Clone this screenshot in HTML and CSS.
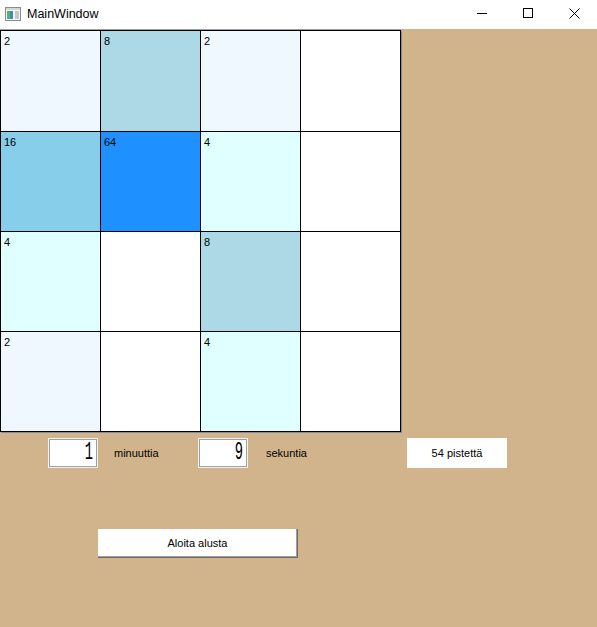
FILE: index.html
```html
<!DOCTYPE html>
<html lang="fi">
<head>
<meta charset="utf-8">
<title>MainWindow</title>
<link rel="stylesheet" href="styles.css">
</head>
<body>
<div class="window">
  <header class="titlebar">
    <svg class="app-icon" width="16" height="14" viewBox="0 0 16 14">
      <rect x="0.5" y="0.5" width="15" height="13" fill="#f4f4f4" stroke="#8c8c8c"/>
      <rect x="1" y="1" width="14" height="2" fill="#d6d6d6"/>
      <rect x="2" y="4" width="6" height="8" fill="#3d8fb0"/>
      <rect x="2" y="4" width="3" height="8" fill="#5fae7a"/>
      <rect x="10" y="4" width="4" height="8" fill="#c8c8c8"/>
    </svg>
    <span class="title">MainWindow</span>
    <div class="win-buttons">
      <div class="win-btn">
        <svg width="10" height="10" viewBox="0 0 10 10"><line x1="0" y1="5.5" x2="10" y2="5.5" stroke="#000" stroke-width="1"/></svg>
      </div>
      <div class="win-btn">
        <svg width="10" height="10" viewBox="0 0 10 10"><rect x="0.5" y="0.5" width="9" height="9" fill="none" stroke="#000" stroke-width="1"/></svg>
      </div>
      <div class="win-btn">
        <svg width="11" height="11" viewBox="0 0 11 11"><path d="M0.5 0.5 L10.5 10.5 M10.5 0.5 L0.5 10.5" stroke="#000" stroke-width="1"/></svg>
      </div>
    </div>
  </header>

  <main class="content">
    <div class="board-frame">
      <div class="board">
        <div class="cell c2">2</div>
        <div class="cell c8">8</div>
        <div class="cell c2">2</div>
        <div class="cell"></div>

        <div class="cell c16">16</div>
        <div class="cell c64">64</div>
        <div class="cell c4">4</div>
        <div class="cell"></div>

        <div class="cell c4">4</div>
        <div class="cell"></div>
        <div class="cell c8">8</div>
        <div class="cell"></div>

        <div class="cell c2">2</div>
        <div class="cell"></div>
        <div class="cell c4">4</div>
        <div class="cell"></div>
      </div>
    </div>

    <div class="controls">
      <div class="lcd"><span class="lcd-digit">1</span></div>
      <span class="label label-min">minuuttia</span>
      <div class="lcd"><span class="lcd-digit">9</span></div>
      <span class="label label-sec">sekuntia</span>
      <div class="score">54 pistettä</div>
    </div>

    <div class="actions">
      <button class="restart" type="button">Aloita alusta</button>
    </div>
  </main>
</div>
</body>
</html>
```

FILE: styles.css
```css
html, body {
  margin: 0;
  padding: 0;
}

body {
  width: 597px;
  height: 627px;
  overflow: hidden;
  background: #d2b48c;
  font-family: "Liberation Sans", Arial, sans-serif;
  font-size: 11px;
  color: #000;
}

.window {
  display: flex;
  flex-direction: column;
  height: 100%;
}

.titlebar {
  height: 29px;
  background: #ffffff;
  display: flex;
  align-items: center;
}

.app-icon {
  margin-left: 5px;
  margin-top: -1px;
  flex: none;
}

.title {
  margin-left: 6px;
  font-family: "Liberation Sans", Arial, sans-serif;
  font-size: 12.5px;
  line-height: 29px;
  color: #000;
}

.win-buttons {
  margin-left: auto;
  display: flex;
  height: 29px;
}

.win-btn {
  width: 46px;
  height: 29px;
  display: flex;
  justify-content: center;
  align-items: flex-start;
  padding-top: 8px;
  box-sizing: border-box;
}

.content {
  display: flex;
  flex-direction: column;
}

.board-frame {
  width: 401px;
  border-top: 1px solid #a0a0a0;
}

.board {
  display: grid;
  grid-template-columns: repeat(4, 99px);
  grid-template-rows: 100px 99px 99px 99px;
  gap: 1px;
  padding: 1px;
  background: #000;
  box-shadow: 1px 1px 0 #8a8a96;
}

.cell {
  background: #ffffff;
  padding: 4px 0 0 3px;
  font-size: 11px;
  line-height: 13px;
  box-sizing: border-box;
}

.c2 { background: #f0f8ff; }
.c4 { background: #e0ffff; }
.c8 { background: #add8e6; }
.c16 { background: #87ceeb; }
.c64 { background: #1e90ff; }

.controls {
  display: flex;
  align-items: center;
  margin-top: 6px;
  padding-left: 48px;
  height: 30px;
}

.lcd {
  width: 50px;
  height: 30px;
  box-sizing: border-box;
  background: #ffffff;
  border: 1px solid #f2f2f2;
  box-shadow: inset 1px 1px 0 #a0a0a0, inset -1px -1px 0 #a0a0a0;
  display: flex;
  justify-content: flex-end;
  align-items: center;
  padding-right: 4px;
  flex: none;
}

.lcd-digit {
  font-family: "Liberation Mono", monospace;
  font-size: 25px;
  line-height: 24px;
  font-weight: normal;
  display: inline-block;
  transform: scaleX(0.55);
  transform-origin: right center;
}

.label {
  font-size: 11px;
  line-height: 13px;
  flex: none;
}

.label-min {
  margin-left: 16px;
  width: 84px;
}

.label-sec {
  margin-left: 18px;
  width: 141px;
}

.score {
  width: 100px;
  height: 30px;
  background: #ffffff;
  display: flex;
  justify-content: center;
  align-items: center;
  font-size: 11px;
  flex: none;
}

.actions {
  margin-top: 61px;
  padding-left: 98px;
}

.restart {
  width: 200px;
  height: 29px;
  margin: 0;
  padding: 0;
  background: #ffffff;
  border: none;
  border-right: 1px solid #696969;
  border-bottom: 1px solid #696969;
  box-shadow: inset -1px -1px 0 #a0a0a0;
  font-family: "Liberation Sans", Arial, sans-serif;
  font-size: 11px;
  color: #000;
  display: block;
}
```
